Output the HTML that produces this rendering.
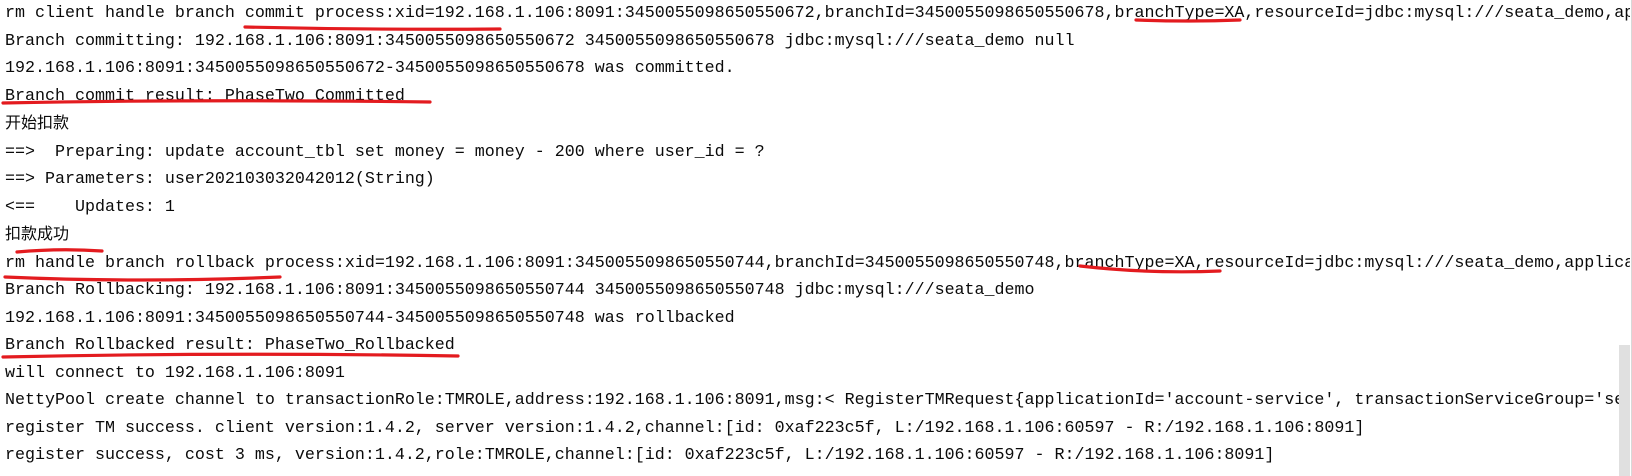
<!DOCTYPE html>
<html><head><meta charset="utf-8">
<style>
html,body{margin:0;padding:0;background:#fff;}
body{width:1632px;height:476px;overflow:hidden;position:relative;}
.log{position:absolute;left:5px;top:0;font-family:"Liberation Mono","Noto Sans CJK SC",monospace;font-size:16.67px;line-height:27.5px;color:#0a0a0a;white-space:pre;width:1625px;overflow:hidden;}
.cn{font-family:"Liberation Sans","Noto Sans CJK SC",sans-serif;font-size:16px;}
.sb{position:absolute;left:1619px;top:345px;width:11px;height:131px;background:#e0e0e0;}
.edge{position:absolute;left:1631px;top:0;width:1px;height:476px;background:#d8d8d8;}
svg{position:absolute;left:0;top:0;}
</style></head><body>
<div class="log">rm client handle branch commit process:xid=192.168.1.106:8091:3450055098650550672,branchId=3450055098650550678,branchType=XA,resourceId=jdbc:mysql:///seata_demo,applicationData=null
Branch committing: 192.168.1.106:8091:3450055098650550672 3450055098650550678 jdbc:mysql:///seata_demo null
192.168.1.106:8091:3450055098650550672-3450055098650550678 was committed.
Branch commit result: PhaseTwo_Committed
<span class="cn">开始扣款</span>
==>  Preparing: update account_tbl set money = money - 200 where user_id = ?
==> Parameters: user202103032042012(String)
&lt;==    Updates: 1
<span class="cn">扣款成功</span>
rm handle branch rollback process:xid=192.168.1.106:8091:3450055098650550744,branchId=3450055098650550748,branchType=XA,resourceId=jdbc:mysql:///seata_demo,applicationData=null
Branch Rollbacking: 192.168.1.106:8091:3450055098650550744 3450055098650550748 jdbc:mysql:///seata_demo
192.168.1.106:8091:3450055098650550744-3450055098650550748 was rollbacked
Branch Rollbacked result: PhaseTwo_Rollbacked
will connect to 192.168.1.106:8091
NettyPool create channel to transactionRole:TMROLE,address:192.168.1.106:8091,msg:&lt; RegisterTMRequest{applicationId='account-service', transactionServiceGroup='seata_tx_group'}
register TM success. client version:1.4.2, server version:1.4.2,channel:[id: 0xaf223c5f, L:/192.168.1.106:60597 - R:/192.168.1.106:8091]
register success, cost 3 ms, version:1.4.2,role:TMROLE,channel:[id: 0xaf223c5f, L:/192.168.1.106:60597 - R:/192.168.1.106:8091]</div>
<div class="sb"></div>
<div class="edge"></div>
<svg width="1632" height="476" fill="none" stroke="#e31b1f" stroke-width="3.2" stroke-linecap="round">
<path d="M245 27 Q370 30 500 29"/>
<path d="M1136 20 Q1190 22 1240 20"/>
<path d="M3 103 Q200 99 430 102"/>
<path d="M17 252 Q60 248 102 251"/>
<path d="M5 277 Q140 283 280 277"/>
<path d="M1080 266 Q1150 274 1220 271"/>
<path d="M3 357 Q230 352 458 356"/>
</svg>
</body></html>
